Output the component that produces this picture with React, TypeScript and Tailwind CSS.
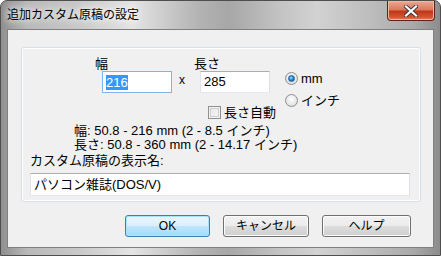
const FONT = "font-['Liberation_Sans','Noto_Sans_CJK_JP',sans-serif]"

function Radio({ checked }: { checked?: boolean }) {
  return (
    <span className="w-[13px] h-[13px] rounded-full border border-[#8e8f8f] bg-[radial-gradient(circle_at_50%_40%,#ffffff_0%,#e2e2e2_70%,#cfcfcf_100%)] flex items-center justify-center shrink-0">
      {checked && (
        <span className="w-[7px] h-[7px] rounded-full bg-[radial-gradient(circle_at_40%_35%,#9fe0ff_0%,#2a8fd6_45%,#0f4f8f_100%)] border border-[#1a5b9a]" />
      )}
    </span>
  )
}

function Btn({ label, w, primary }: { label: string; w: string; primary?: boolean }) {
  return (
    <div
      className={`${w} h-[22px] rounded-[3px] border flex items-center justify-center text-[12px] text-black ${
        primary
          ? "border-[#3c7fb1] bg-[linear-gradient(#eaf6fd_0%,#d9f0fc_50%,#bee6fd_51%,#a7d9f5_100%)] shadow-[inset_0_0_0_1px_#a9e2f9]"
          : "border-[#707070] bg-[linear-gradient(#f2f2f2_0%,#ebebeb_50%,#dddddd_51%,#cfcfcf_100%)] shadow-[inset_0_0_0_1px_#fcfcfc]"
      }`}
    >
      {label}
    </div>
  )
}

export default function App() {
  return (
    <div className={`w-[441px] h-[256px] ${FONT} overflow-hidden`}>
      <div className="w-full h-full rounded-t-[7px] border border-[#4e4e4e] bg-[linear-gradient(90deg,#8f8f8f_0%,#b9b9b9_6%,#c9c9c9_18%,#e4e4e4_30%,#b3b3b3_45%,#a7a7a7_52%,#c4c4c4_64%,#d2d2d2_72%,#bdbdbd_84%,#a9a9a9_94%,#8c8c8c_100%)] flex flex-col">
        {/* title bar */}
        <div className="h-[28px] flex items-start justify-between shrink-0">
          <div className="pl-[6px] pt-[7px] text-[12px] leading-[15px] text-black [text-shadow:0_0_6px_#ffffff,0_0_10px_#ffffff]">
            追加カスタム原稿の設定
          </div>
          <div className="mr-[5px] w-[48px] h-[20px] rounded-b-[4px] border border-t-0 border-[#5e2318] bg-[linear-gradient(#eba893_0%,#dc7a5e_45%,#c2371b_55%,#d2552f_85%,#e28561_100%)] shadow-[inset_0_0_0_1px_#f0b8a4] flex items-center justify-center">
            <svg width="14" height="12" viewBox="0 0 14 12">
              <path d="M2 1.5 L12 10.5 M12 1.5 L2 10.5" stroke="#3a3a3a" strokeWidth="4" strokeLinecap="square" />
              <path d="M2 1.5 L12 10.5 M12 1.5 L2 10.5" stroke="#ffffff" strokeWidth="2.2" strokeLinecap="square" />
            </svg>
          </div>
        </div>

        {/* client area */}
        <div className="flex-1 mx-[6px] mb-[7px] border border-[#7f7f7f] bg-[#f0f0f0] flex flex-col">
          {/* group box */}
          <div className="ml-[13px] mt-[17px] w-[400px] h-[155px] rounded-[3px] border border-[#d5dfe5] shadow-[inset_0_0_0_1px_#ffffff] flex flex-col text-[12px] text-black">
            <div className="flex items-start pl-[73px] pt-[8px]">
              <div className="flex flex-col">
                <div className="h-[15px] leading-[15px] text-[13px]">幅</div>
                <div className="ml-[7px] w-[70px] h-[22px] border border-[#7eb4ea] bg-white flex items-center pl-[3px]">
                  <span className="bg-[#3399ff] text-white text-[13px] leading-[15px]">216</span>
                </div>
              </div>
              <div className="mt-[18px] ml-[7px] text-[12px] leading-[12px]">x</div>
              <div className="flex flex-col ml-[9px]">
                <div className="h-[15px] leading-[15px] text-[13px]">長さ</div>
                <div className="ml-[6px] w-[70px] h-[22px] border border-[#abadb3] border-l-[#e2e3ea] border-r-[#dbdfe6] border-b-[#e3e9ef] bg-white flex items-center pl-[3px] text-[13px]">
                  285
                </div>
                <div className="ml-[14px] mt-[12px] flex items-center gap-[3px]">
                  <span className="w-[13px] h-[13px] border border-[#8e8f8f] bg-[linear-gradient(135deg,#e6e6e6,#f8f8f8)] shadow-[inset_0_0_0_1px_#f4f4f4,inset_0_0_0_2px_#cdcdcd]" />
                  <span className="text-[13px] leading-[15px]">長さ自動</span>
                </div>
              </div>
              <div className="flex flex-col ml-[9px] mt-[16px] gap-[9px]">
                <div className="flex items-center gap-[3px]">
                  <Radio checked />
                  <span className="text-[13px] leading-[13px]">mm</span>
                </div>
                <div className="flex items-center gap-[3px]">
                  <Radio />
                  <span className="text-[13px] leading-[13px]">インチ</span>
                </div>
              </div>
            </div>
            <div className="pl-[52px] mt-[4px] text-[13px] leading-[14px]">
              <div>幅: 50.8 - 216 mm (2 - 8.5 インチ)</div>
              <div>長さ: 50.8 - 360 mm (2 - 14.17 インチ)</div>
            </div>
            <div className="pl-[8px] mt-[1px] text-[13px] leading-[15px]">カスタム原稿の表示名:</div>
            <div className="ml-[8px] mt-[5px] w-[380px] h-[23px] border border-[#abadb3] border-l-[#e2e3ea] border-r-[#dbdfe6] border-b-[#e3e9ef] bg-white flex items-center pl-[3px] text-[13px]">
              パソコン雑誌(DOS/V)
            </div>
          </div>

          {/* buttons */}
          <div className="flex justify-end mt-[13px] mr-[22px] gap-[13px]">
            <Btn label="OK" w="w-[85px]" primary />
            <Btn label="キャンセル" w="w-[86px]" />
            <Btn label="ヘルプ" w="w-[89px]" />
          </div>
        </div>
      </div>
    </div>
  )
}
